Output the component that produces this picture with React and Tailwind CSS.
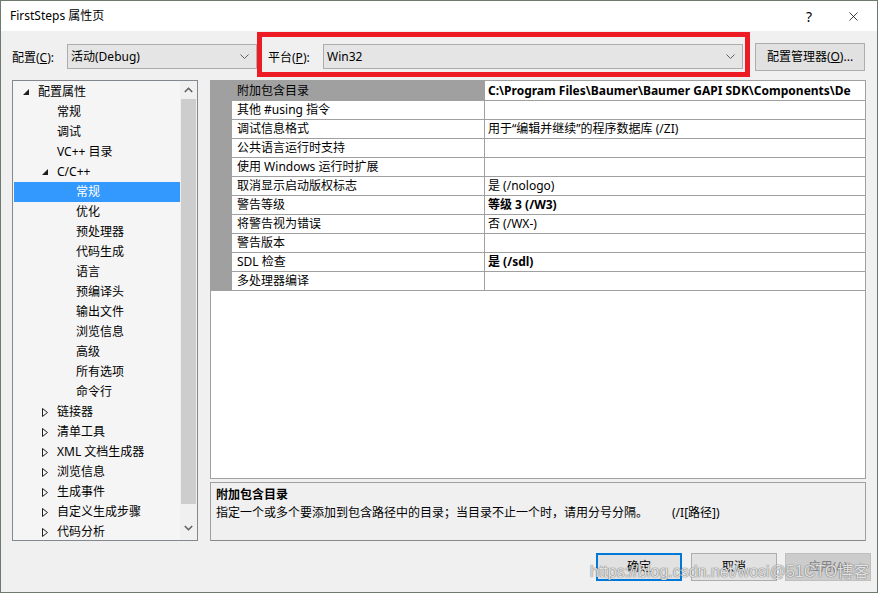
import { X } from 'lucide-react';

// Tree items: t = text, l = level, e = 'open' | 'closed'
const tree = [
  { t: '配置属性', l: 0, e: 'open' },
  { t: '常规', l: 1 },
  { t: '调试', l: 1 },
  { t: 'VC++ 目录', l: 1 },
  { t: 'C/C++', l: 1, e: 'open' },
  { t: '常规', l: 2, sel: true },
  { t: '优化', l: 2 },
  { t: '预处理器', l: 2 },
  { t: '代码生成', l: 2 },
  { t: '语言', l: 2 },
  { t: '预编译头', l: 2 },
  { t: '输出文件', l: 2 },
  { t: '浏览信息', l: 2 },
  { t: '高级', l: 2 },
  { t: '所有选项', l: 2 },
  { t: '命令行', l: 2 },
  { t: '链接器', l: 1, e: 'closed' },
  { t: '清单工具', l: 1, e: 'closed' },
  { t: 'XML 文档生成器', l: 1, e: 'closed' },
  { t: '浏览信息', l: 1, e: 'closed' },
  { t: '生成事件', l: 1, e: 'closed' },
  { t: '自定义生成步骤', l: 1, e: 'closed' },
  { t: '代码分析', l: 1, e: 'closed' },
];

const levelPad = ['pl-[9px]', 'pl-[28px]', 'pl-[47px]'];

// Property grid rows
const props = [
  { n: '附加包含目录', v: 'C:\\Program Files\\Baumer\\Baumer GAPI SDK\\Components\\De', b: true, sel: true },
  { n: '其他 #using 指令', v: '' },
  { n: '调试信息格式', v: '用于“编辑并继续”的程序数据库 (/ZI)' },
  { n: '公共语言运行时支持', v: '' },
  { n: '使用 Windows 运行时扩展', v: '' },
  { n: '取消显示启动版权标志', v: '是 (/nologo)' },
  { n: '警告等级', v: '等级 3 (/W3)', b: true },
  { n: '将警告视为错误', v: '否 (/WX-)' },
  { n: '警告版本', v: '' },
  { n: 'SDL 检查', v: '是 (/sdl)', b: true },
  { n: '多处理器编译', v: '' },
];

function Chevron() {
  return (
    <svg width="9" height="5" viewBox="0 0 9 5" className="shrink-0">
      <path d="M0.5 0.5 L4.5 4.5 L8.5 0.5" fill="none" stroke="#606060" strokeWidth="1" />
    </svg>
  );
}

function Combo({ value, className }) {
  return (
    <div className={`h-[25px] bg-[#e5e5e5] border border-[#adadad] flex items-center justify-between pl-[3px] pr-[7px] ${className}`}>
      <span>{value}</span>
      <Chevron />
    </div>
  );
}

function Arrow({ state, selected }) {
  if (state === 'open') {
    return (
      <svg width="6" height="6" viewBox="0 0 6 6">
        <polygon points="6,0 6,6 0,6" fill={selected ? '#fff' : '#1e1e1e'} />
      </svg>
    );
  }
  if (state === 'closed') {
    return (
      <svg width="6" height="9" viewBox="0 0 6 9">
        <polygon points="0.5,0.5 5.5,4.5 0.5,8.5" fill="none" stroke="#1e1e1e" strokeWidth="1" />
      </svg>
    );
  }
  return null;
}

export default function App() {
  return (
    <div className="relative w-[878px] h-[593px] border border-[#6e7a6e] flex flex-col overflow-hidden text-[12px] text-black font-['Noto_Sans','Noto_Sans_CJK_SC',sans-serif]">
      {/* Title bar */}
      <div className="h-[30px] bg-white flex items-center pl-[9px] shrink-0">
        <span className="flex-1">FirstSteps 属性页</span>
        <span className="text-[14px] mr-[34px]">?</span>
        <X className="w-[15px] h-[15px] mr-[16px]" strokeWidth={1.2} />
      </div>

      {/* Body */}
      <div className="flex-1 bg-[#f0f0f0] flex flex-col">
        {/* Top row */}
        <div className="h-[49px] flex items-start pl-[11px] shrink-0">
          <span className="mt-[18px] w-[55px]">配置(<u>C</u>):</span>
          <Combo value="活动(Debug)" className="mt-[13px] w-[190px]" />
          <div className="mt-[1px] h-[45px] w-[493px] border-[5px] border-[#ed1c24] flex items-start pl-[6px] pr-[2px]">
            <span className="mt-[12px] w-[55px]">平台(<u>P</u>):</span>
            <Combo value="Win32" className="mt-[7px] flex-1" />
          </div>
          <div className="mt-[12px] ml-[5px] h-[28px] w-[110px] bg-[#e1e1e1] border border-[#adadad] flex items-center justify-center">
            配置管理器(<u>O</u>)...
          </div>
        </div>

        {/* Main panels */}
        <div className="flex pl-[11px] gap-[12px] h-[461px] shrink-0">
          {/* Tree */}
          <div className="w-[186px] h-full border border-[#828790] bg-[#f5f5f5] flex">
            <div className="flex-1 pt-[1px] overflow-hidden">
              {tree.map((it, i) => (
                <div
                  key={i}
                  className={`h-[20px] flex items-center ml-[1px] ${levelPad[it.l]} ${it.sel ? 'bg-[#3399ff] text-white' : ''}`}
                >
                  <span className="w-[15px] flex items-center">
                    <Arrow state={it.e} selected={it.sel} />
                  </span>
                  <span className="whitespace-nowrap">{it.t}</span>
                </div>
              ))}
            </div>
            <div className="w-[17px] bg-[#f0f0f0] flex flex-col items-center">
              <div className="h-[18px] flex items-center justify-center">
                <svg width="9" height="6" viewBox="0 0 9 6">
                  <path d="M0.8 5 L4.5 1.3 L8.2 5" fill="none" stroke="#606060" strokeWidth="1.6" />
                </svg>
              </div>
              <div className="w-[15px] h-[405px] bg-[#cdcdcd]" />
              <div className="flex-1 flex items-end justify-center pb-[9px]">
                <svg width="9" height="6" viewBox="0 0 9 6">
                  <path d="M0.8 1 L4.5 4.7 L8.2 1" fill="none" stroke="#606060" strokeWidth="1.6" />
                </svg>
              </div>
            </div>
          </div>

          {/* Right side */}
          <div className="w-[656px] flex flex-col gap-[3px]">
            <div className="h-[399px] border border-[#a0a0a0] bg-white overflow-hidden">
              {props.map((p, i) => (
                <div key={i} className={`flex ${i === 0 ? 'h-[20px]' : 'h-[19px]'}`}>
                  <div className="w-[21px] bg-[#a0a0a0] shrink-0" />
                  <div className={`w-[253px] shrink-0 border-r border-b border-[#a0a0a0] pl-[5px] flex items-center whitespace-nowrap ${p.sel ? 'bg-[#a0a0a0]' : ''}`}>
                    {p.n}
                  </div>
                  <div className={`flex-1 min-w-0 border-b border-[#a0a0a0] pl-[3px] flex items-center whitespace-nowrap overflow-hidden ${p.b ? 'font-bold' : ''}`}>
                    {p.v}
                  </div>
                </div>
              ))}
            </div>
            <div className="flex-1 border border-[#a0a0a0] border-b-[#8a8a8a] bg-[#f0f0f0] pl-[5px] pt-[3px]">
              <div className="font-bold h-[18px] flex items-center">附加包含目录</div>
              <div className="h-[18px] flex items-center whitespace-nowrap">
                指定一个或多个要添加到包含路径中的目录；当目录不止一个时，请用分号分隔。<span className="ml-[24px]">(/I[路径])</span>
              </div>
            </div>
          </div>
        </div>

        {/* Buttons */}
        <div className="flex justify-end pr-[6px] mt-[12px]">
          <div className="w-[86px] h-[28px] bg-[#e1e1e1] border-2 border-[#0078d7] flex items-center justify-center">确定</div>
          <div className="ml-[9px] w-[86px] h-[28px] bg-[#e1e1e1] border border-[#adadad] flex items-center justify-center">取消</div>
          <div className="ml-[8px] w-[86px] h-[28px] bg-[#cccccc] border border-[#bfbfbf] text-[#838383] flex items-center justify-center">应用(A)</div>
        </div>
      </div>

      {/* Watermark */}
      <div className="absolute left-[589px] top-[562px] text-[16px] leading-[18px] text-white/80 whitespace-nowrap font-['Liberation_Sans','Noto_Sans_CJK_SC',sans-serif] [text-shadow:0_0_1px_#666,0_0_1px_#666]">
        https://blog.csdn.net/wosi@51CTO博客
      </div>
    </div>
  );
}
